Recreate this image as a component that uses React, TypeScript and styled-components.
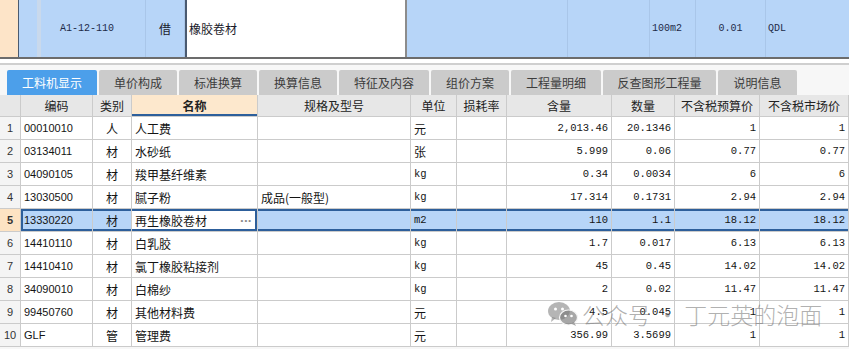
import styled, { createGlobalStyle } from "styled-components";

const GlobalStyle = createGlobalStyle`
  html, body {
    margin: 0;
    padding: 0;
    background: #ffffff;
    overflow: hidden;
  }
  body {
    font-family: "Noto Sans CJK SC", "Liberation Sans", sans-serif;
  }
`;

const COLS = "21px 72px 39px 126px 153px 46px 50px 105px 63px 85px 89px";
const SEL = "#2d5f9b";

const Page = styled.div`
  position: relative;
  width: 849px;
  height: 349px;
  overflow: hidden;
  background: #f7f7f7;
`;

/* ---------- top (parent) row ---------- */

const TopRow = styled.div`
  display: flex;
  height: 57px;
  border-bottom: 2px solid #6c6c6c;
  background: #b7d5f8;
`;

const TopCell = styled.div<{ $w: number; $bg?: string; $line?: string; $align?: string; $pad?: number }>`
  box-sizing: border-box;
  flex: 0 0 ${({ $w }) => $w}px;
  display: flex;
  align-items: center;
  justify-content: ${({ $align }) => $align || "flex-start"};
  padding: 0 2px 0 ${({ $pad }) => ($pad ?? 2)}px;
  background: ${({ $bg }) => $bg || "transparent"};
  border-right: 1px solid ${({ $line }) => $line || "#a9c6e9"};
  font-size: 12px;
  color: #1b1b2b;
`;

const TopMono = styled.span`
  font-family: "Liberation Mono", monospace;
  font-size: 10px;
  color: #1d2a48;
`;

const TreeBar = styled.div`
  flex: 0 0 4px;
  margin-left: 18px;
  background: #c9d9ec;
`;

const EditCell = styled(TopCell)`
  border-left: 2px solid #4a5a70;
  border-right: 2px solid #8c8c8c;
  background: #ffffff;
`;

/* ---------- tabs ---------- */

const Separator = styled.div`
  height: 4px;
  background: #ffffff;
  border-bottom: 2px solid #cfcfcf;
`;

const TabBar = styled.div`
  display: flex;
  gap: 2px;
  height: 25px;
  padding: 5px 0 0 7px;
  background: #f7f7f7;
`;

const Tab = styled.div<{ $w: number; $active?: boolean }>`
  flex: 0 0 ${({ $w }) => $w}px;
  display: flex;
  align-items: center;
  justify-content: center;
  border-radius: 2px 2px 0 0;
  font-size: 12px;
  background: ${({ $active }) => ($active ? "#4c9fea" : "#cbcbcb")};
  color: ${({ $active }) => ($active ? "#ffffff" : "#3c3c3c")};
`;

/* ---------- grid ---------- */

const Grid = styled.div`
  background: #ffffff;
`;

const Row = styled.div<{ $h: number }>`
  display: grid;
  grid-template-columns: ${COLS};
  height: ${({ $h }) => $h}px;
`;

type Align = "left" | "center" | "right";
type Kind = "cjk" | "mono" | "sans";

const Cell = styled.div<{
  $align?: Align;
  $kind?: Kind;
  $bg?: string;
  $sel?: boolean;
  $edge?: "left" | "right";
}>`
  box-sizing: border-box;
  display: flex;
  align-items: center;
  justify-content: ${({ $align }) =>
    $align === "right" ? "flex-end" : $align === "center" ? "center" : "flex-start"};
  padding: 0 3px;
  overflow: hidden;
  white-space: nowrap;
  border-right: 1px solid #cbcbcb;
  border-bottom: 1px solid #cbcbcb;
  background: ${({ $bg }) => $bg || "transparent"};
  color: #141414;
  font-family: ${({ $kind }) =>
    $kind === "mono"
      ? '"Liberation Mono", monospace'
      : $kind === "sans"
      ? '"Liberation Sans", Arial, sans-serif'
      : '"Noto Sans CJK SC", sans-serif'};
  font-size: ${({ $kind }) => ($kind === "mono" ? "10.5px" : $kind === "sans" ? "11px" : "12px")};
  box-shadow: ${({ $sel, $edge }) =>
    $sel
      ? [
          `inset 0 2px 0 ${SEL}`,
          `inset 0 -2px 0 ${SEL}`,
          $edge === "left" ? `inset 2px 0 0 ${SEL}` : "",
          $edge === "right" ? `inset -2px 0 0 ${SEL}` : "",
        ]
          .filter(Boolean)
          .join(", ")
      : "none"};
`;

const HeadCell = styled(Cell)<{ $focus?: boolean }>`
  justify-content: center;
  background: ${({ $focus }) => ($focus ? "#fde8cd" : "#e7e7e7")};
  font-weight: ${({ $focus }) => ($focus ? 700 : 400)};
  color: #222;
  box-shadow: ${({ $focus }) => ($focus ? `inset 0 -2px 0 ${SEL}` : "none")};
`;

const NumCell = styled(Cell)<{ $active?: boolean }>`
  justify-content: center;
  padding: 0;
  font-family: "Liberation Sans", Arial, sans-serif;
  font-size: 11px;
  font-weight: ${({ $active }) => ($active ? 700 : 400)};
  color: #333;
  background: ${({ $active }) => ($active ? "#fde3c3" : "#f4f4f4")};
`;

const Ellipsis = styled.span`
  margin-left: auto;
  margin-right: 2px;
  color: #888;
  font-family: "Liberation Sans", Arial, sans-serif;
  font-size: 8px;
  letter-spacing: 1px;
`;

/* ---------- watermark ---------- */

const Watermark = styled.div`
  position: absolute;
  left: 547px;
  top: 297px;
  display: flex;
  align-items: center;
  gap: 3px;
  font-family: "Noto Sans CJK SC", sans-serif;
  font-size: 23px;
  font-weight: 300;
  color: rgba(110, 110, 110, 0.55);
  pointer-events: none;
`;

const WeChatIcon = () => (
  <svg width="32" height="26" viewBox="0 0 32 26">
    <ellipse cx="12" cy="10" rx="11" ry="9" fill="rgba(120,120,120,0.55)" />
    <path d="M5 16 L4 21 L9 17 Z" fill="rgba(120,120,120,0.55)" />
    <circle cx="8.5" cy="8" r="1.5" fill="#fff" />
    <circle cx="15.5" cy="8" r="1.5" fill="#fff" />
    <ellipse cx="21.5" cy="16.5" rx="9" ry="7.5" fill="rgba(120,120,120,0.65)" stroke="#f6f6f6" strokeWidth="1.2" />
    <path d="M27 21 L29 25 L24 22.5 Z" fill="rgba(120,120,120,0.65)" />
    <circle cx="18.5" cy="15" r="1.3" fill="#fff" />
    <circle cx="24.5" cy="15" r="1.3" fill="#fff" />
  </svg>
);

const tabs: [string, number][] = [
  ["工料机显示", 90],
  ["单价构成", 78],
  ["标准换算", 78],
  ["换算信息", 78],
  ["特征及内容", 90],
  ["组价方案", 78],
  ["工程量明细", 90],
  ["反查图形工程量", 113],
  ["说明信息", 79],
];

const headers = [
  "",
  "编码",
  "类别",
  "名称",
  "规格及型号",
  "单位",
  "损耗率",
  "含量",
  "数量",
  "不含税预算价",
  "不含税市场价",
];

type Item = {
  code: string;
  type: string;
  name: string;
  spec: string;
  unit: string;
  content: string;
  qty: string;
  budget: string;
  market: string;
};

const rows: Item[] = [
  { code: "00010010", type: "人", name: "人工费", spec: "", unit: "元", content: "2,013.46", qty: "20.1346", budget: "1", market: "1" },
  { code: "03134011", type: "材", name: "水砂纸", spec: "", unit: "张", content: "5.999", qty: "0.06", budget: "0.77", market: "0.77" },
  { code: "04090105", type: "材", name: "羧甲基纤维素", spec: "", unit: "kg", content: "0.34", qty: "0.0034", budget: "6", market: "6" },
  { code: "13030500", type: "材", name: "腻子粉", spec: "成品(一般型)", unit: "kg", content: "17.314", qty: "0.1731", budget: "2.94", market: "2.94" },
  { code: "13330220", type: "材", name: "再生橡胶卷材", spec: "", unit: "m2", content: "110", qty: "1.1", budget: "18.12", market: "18.12" },
  { code: "14410110", type: "材", name: "白乳胶", spec: "", unit: "kg", content: "1.7", qty: "0.017", budget: "6.13", market: "6.13" },
  { code: "14410410", type: "材", name: "氯丁橡胶粘接剂", spec: "", unit: "kg", content: "45", qty: "0.45", budget: "14.02", market: "14.02" },
  { code: "34090010", type: "材", name: "白棉纱", spec: "", unit: "kg", content: "2", qty: "0.02", budget: "11.47", market: "11.47" },
  { code: "99450760", type: "材", name: "其他材料费", spec: "", unit: "元", content: "4.5", qty: "0.045", budget: "1", market: "1" },
  { code: "GLF", type: "管", name: "管理费", spec: "", unit: "元", content: "356.99", qty: "3.5699", budget: "1", market: "1" },
];

const SELECTED = 4;
const ROW_BLUE = "#b7d5f8";

const unitKind = (u: string): Kind => (/^[a-z0-9]+$/i.test(u) ? "mono" : "cjk");

export default function App() {
  return (
    <>
      <GlobalStyle />
      <Page>
        <TopRow>
          <TopCell $w={19} $bg="#fde4c8" $line="#4a5a70" />
          <TreeBar />
          <TopCell $w={105} $pad={19}>
            <TopMono>A1-12-110</TopMono>
          </TopCell>
          <TopCell $w={39} $align="center">借</TopCell>
          <EditCell $w={222}>橡胶卷材</EditCell>
          <TopCell $w={161} />
          <TopCell $w={82} />
          <TopCell $w={46}>
            <TopMono>100m2</TopMono>
          </TopCell>
          <TopCell $w={70} $align="center">
            <TopMono>0.01</TopMono>
          </TopCell>
          <TopCell $w={82} $line="transparent">
            <TopMono>QDL</TopMono>
          </TopCell>
        </TopRow>
        <Separator />
        <TabBar>
          {tabs.map(([label, w], i) => (
            <Tab key={label} $w={w} $active={i === 0}>
              {label}
            </Tab>
          ))}
        </TabBar>
        <Grid>
          <Row $h={22}>
            {headers.map((h, i) => (
              <HeadCell key={i} $focus={i === 3}>
                {h}
              </HeadCell>
            ))}
          </Row>
          {rows.map((r, i) => {
            const sel = i === SELECTED;
            const bg = sel ? ROW_BLUE : undefined;
            return (
              <Row $h={23} key={r.code}>
                <NumCell $active={sel}>{i + 1}</NumCell>
                <Cell $kind="sans" $bg={bg} $sel={sel} $edge="left">
                  {r.code}
                </Cell>
                <Cell $align="center" $bg={bg} $sel={sel}>
                  {r.type}
                </Cell>
                <Cell $bg={sel ? "#ffffff" : undefined} $sel={sel} $edge="right">
                  {r.name}
                  {sel && <Ellipsis>•••</Ellipsis>}
                </Cell>
                <Cell $bg={bg} $sel={sel}>{r.spec}</Cell>
                <Cell $kind={unitKind(r.unit)} $bg={bg} $sel={sel}>
                  {r.unit}
                </Cell>
                <Cell $bg={bg} $sel={sel} />
                <Cell $kind="mono" $align="right" $bg={bg} $sel={sel}>
                  {r.content}
                </Cell>
                <Cell $kind="mono" $align="right" $bg={bg} $sel={sel}>
                  {r.qty}
                </Cell>
                <Cell $kind="mono" $align="right" $bg={bg} $sel={sel}>
                  {r.budget}
                </Cell>
                <Cell $kind="mono" $align="right" $bg={bg} $sel={sel}>
                  {r.market}
                </Cell>
              </Row>
            );
          })}
        </Grid>
        <Watermark>
          <WeChatIcon />
          <span>公众号 · 丁元英的泡面</span>
        </Watermark>
      </Page>
    </>
  );
}
